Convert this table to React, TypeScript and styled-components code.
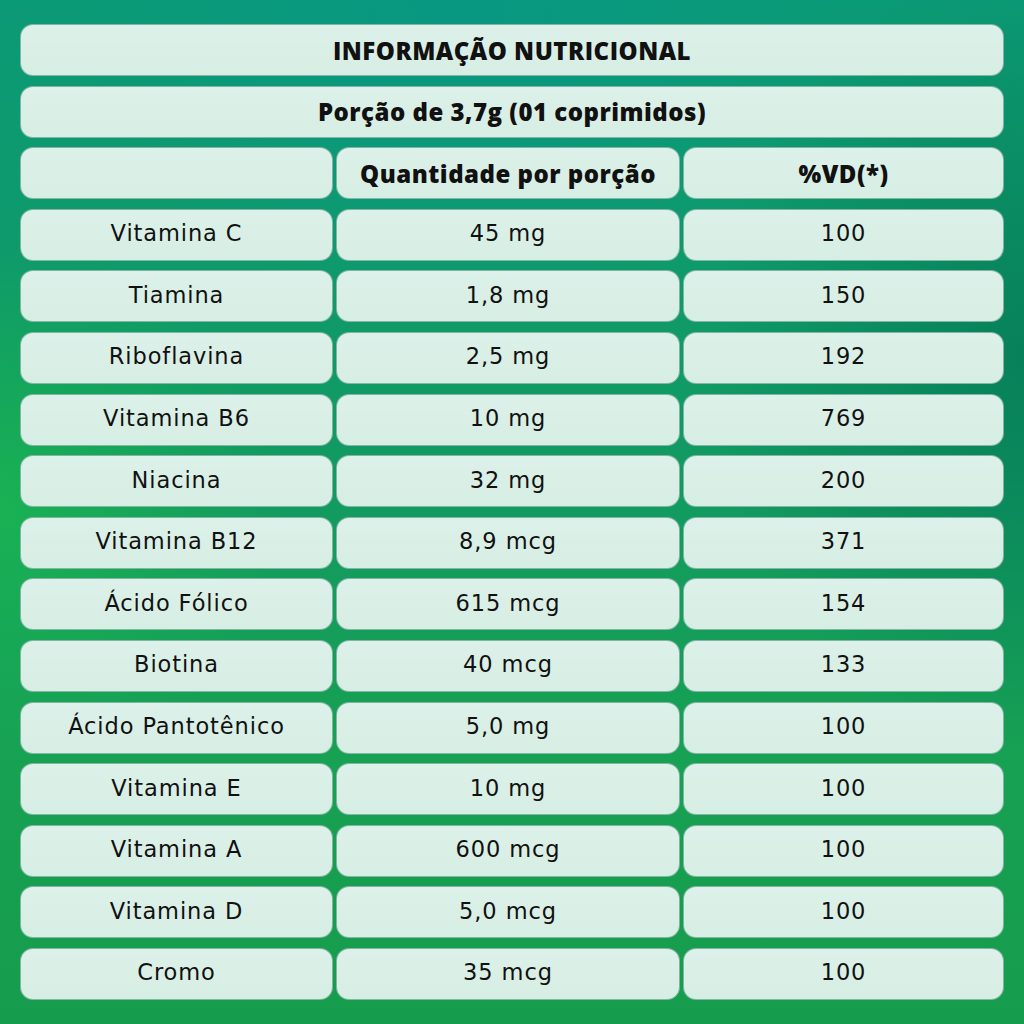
import React from "react";
import styled, { createGlobalStyle } from "styled-components";

const Global = createGlobalStyle`
  html, body { margin: 0; padding: 0; }
  body { width: 1024px; height: 1024px; overflow: hidden; }
`;

const Page = styled.div`
  width: 1024px;
  height: 1024px;
  box-sizing: border-box;
  padding: 24px 20px 0 20px;
  background:
    radial-gradient(ellipse 420px 380px at 0% 50%, rgba(26, 180, 82, 0.9), rgba(26, 180, 82, 0) 70%),
    radial-gradient(ellipse 520px 420px at 45% 0%, rgba(8, 152, 132, 0.9), rgba(8, 152, 132, 0) 75%),
    radial-gradient(ellipse 420px 520px at 100% 35%, rgba(6, 126, 88, 0.9), rgba(6, 126, 88, 0) 75%),
    linear-gradient(180deg, #0b9a76 0%, #119a62 45%, #17a152 75%, #169c4d 100%);
`;

const Table = styled.div`
  display: grid;
  grid-template-columns: 313px 344px 1fr;
  column-gap: 3px;
  row-gap: 9.6px;
  width: 984px;
`;

const Cell = styled.div<{ $span?: number; $bold?: boolean }>`
  grid-column: span ${(p) => p.$span ?? 1};
  height: 52px;
  box-sizing: border-box;
  border-radius: 13px;
  background: linear-gradient(180deg, #dcf1e9 0%, #d7eee4 100%);
  border: 1px solid rgba(6, 90, 66, 0.4);
  display: flex;
  align-items: center;
  justify-content: center;
  color: #111;
  font-family: ${(p) => (p.$bold ? '"Open Sans", sans-serif' : '"DejaVu Sans", sans-serif')};
  font-weight: ${(p) => (p.$bold ? 800 : 400)};
  font-size: ${(p) => (p.$bold ? "24px" : "22.5px")};
  letter-spacing: ${(p) => (p.$bold ? "0.5px" : "0.9px")};
  padding-bottom: ${(p) => (p.$bold ? "0" : "3px")};
`;

const rows: [string, string, string][] = [
  ["Vitamina C", "45 mg", "100"],
  ["Tiamina", "1,8 mg", "150"],
  ["Riboflavina", "2,5 mg", "192"],
  ["Vitamina B6", "10 mg", "769"],
  ["Niacina", "32 mg", "200"],
  ["Vitamina B12", "8,9 mcg", "371"],
  ["Ácido Fólico", "615 mcg", "154"],
  ["Biotina", "40 mcg", "133"],
  ["Ácido Pantotênico", "5,0 mg", "100"],
  ["Vitamina E", "10 mg", "100"],
  ["Vitamina A", "600 mcg", "100"],
  ["Vitamina D", "5,0 mcg", "100"],
  ["Cromo", "35 mcg", "100"],
];

export default function App() {
  return (
    <>
      <Global />
      <Page>
        <Table>
          <Cell $span={3} $bold>INFORMAÇÃO NUTRICIONAL</Cell>
          <Cell $span={3} $bold>Porção de 3,7g (01 coprimidos)</Cell>
          <Cell $bold />
          <Cell $bold>Quantidade por porção</Cell>
          <Cell $bold>%VD(*)</Cell>
          {rows.map(([n, q, v]) => (
            <React.Fragment key={n}>
              <Cell>{n}</Cell>
              <Cell>{q}</Cell>
              <Cell>{v}</Cell>
            </React.Fragment>
          ))}
        </Table>
      </Page>
    </>
  );
}
